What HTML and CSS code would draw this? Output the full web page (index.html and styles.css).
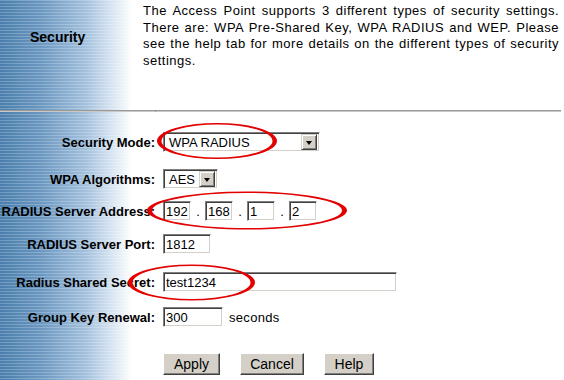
FILE: index.html
```html
<!DOCTYPE html>
<html lang="en">
  <head>
    <meta charset="UTF-8" />
    <title>Security</title>
    <link rel="stylesheet" href="styles.css">
  </head>
  <body>
    <div class="page">
      <div class="intro">
        <div class="side">
          <h2 class="title">Security</h2>
        </div>
        <p class="desc">
          The Access Point supports 3 different types of security settings.
          There are: WPA Pre-Shared Key, WPA RADIUS and WEP. Please see the
          help tab for more details on the different types of security
          settings.
        </p>
      </div>

      <div class="rule">
        <span class="rule-left"></span>
        <span class="rule-right"></span>
      </div>

      <form class="form">
        <div class="row gap-1">
          <div class="label"><span>Security Mode:</span></div>
          <div class="select mode">
            <span class="select-value">WPA RADIUS</span>
            <span class="select-btn"><i class="caret"></i></span>
          </div>
        </div>

        <div class="row gap-2">
          <div class="label"><span>WPA Algorithms:</span></div>
          <div class="select algo">
            <span class="select-value">AES</span>
            <span class="select-btn"><i class="caret"></i></span>
          </div>
        </div>

        <div class="row gap-3">
          <div class="label"><span>RADIUS Server Address:</span></div>
          <div class="ip">
            <input class="field octet" type="text" value="192">
            <span class="dot">.</span>
            <input class="field octet" type="text" value="168">
            <span class="dot">.</span>
            <input class="field octet" type="text" value="1">
            <span class="dot">.</span>
            <input class="field octet" type="text" value="2">
          </div>
        </div>

        <div class="row gap-4">
          <div class="label"><span>RADIUS Server Port:</span></div>
          <input class="field port" type="text" value="1812">
        </div>

        <div class="row gap-5">
          <div class="label"><span>Radius Shared Secret:</span></div>
          <input class="field secret" type="text" value="test1234">
        </div>

        <div class="row gap-6">
          <div class="label"><span>Group Key Renewal:</span></div>
          <input class="field renewal" type="text" value="300">
          <span class="unit">seconds</span>
        </div>

        <div class="row buttons">
          <div class="label"></div>
          <button class="btn apply" type="button">Apply</button>
          <button class="btn cancel" type="button">Cancel</button>
          <button class="btn help" type="button">Help</button>
        </div>
      </form>

      <!-- red marker circles drawn on top of the screenshot -->
      <svg class="marks" width="564" height="380" viewBox="0 0 564 380">
        <path fill-rule="evenodd" d="M157 141 a60 18 0 1 0 120 0 a60 18 0 1 0 -120 0 Z M161.5 141 a55.5 16.5 0 1 0 111 0 a55.5 16.5 0 1 0 -111 0 Z" />
        <path fill-rule="evenodd" d="M147 210.5 a100 19 0 1 0 200 0 a100 19 0 1 0 -200 0 Z M152 210.5 a95 17.5 0 1 0 190 0 a95 17.5 0 1 0 -190 0 Z" />
        <path fill-rule="evenodd" d="M128 282.5 a63.5 18 0 1 0 127 0 a63.5 18 0 1 0 -127 0 Z M132.5 282.5 a59 16.5 0 1 0 118 0 a59 16.5 0 1 0 -118 0 Z" />
      </svg>
    </div>
  </body>
</html>
```

FILE: styles.css
```css
html,
body {
  margin: 0;
  padding: 0;
  background: #fff;
  font-family: "Liberation Sans", Arial, Helvetica, sans-serif;
  color: #000;
}
* {
  box-sizing: border-box;
}
.page {
  position: relative;
  width: 564px;
  height: 380px;
  overflow: hidden;
  background-color: #fff;
  background-image:
    repeating-linear-gradient(to bottom, rgba(255, 255, 255, 0.22) 0 1px, transparent 1px 3px),
    linear-gradient(to right, #4a7eac 0, #6b97c0 40px, #a2c0dc 85px, #dde8f3 115px, #fff 132px);
  background-size: 132px 100%, 132px 100%;
  background-repeat: no-repeat;
}
/* header block */
.intro {
  display: flex;
  height: 110px;
}
.side {
  width: 143px;
  flex-shrink: 0;
}
.title {
  margin: 29px 0 0 30px;
  font-size: 14px;
  line-height: 17px;
  font-weight: bold;
}
.desc {
  width: 416px;
  margin: 3px 0 0;
  font-size: 13px;
  line-height: 16.5px;
  letter-spacing: 0.5px;
  text-align: justify;
}
.rule {
  display: flex;
  width: 561px;
  height: 2px;
}
.rule-left,
.rule-right {
  display: block;
  height: 2px;
  border-top: 1px solid #9a9a9a;
  border-bottom: 1px solid #c8c8c8;
}
.rule-left {
  width: 155px;
}
.rule-right {
  flex: 1;
  border-left: 1px solid #7a7a7a;
}
/* form rows */
.form {
  margin: 0;
}
.row {
  display: flex;
  align-items: center;
  height: 20px;
}
.gap-1 { margin-top: 20px; }
.gap-2 { margin-top: 17px; }
.gap-3 { margin-top: 12px; }
.gap-4 { margin-top: 13px; }
.gap-5 { margin-top: 18px; }
.gap-6 { margin-top: 15px; }
.buttons {
  margin-top: 26px;
  height: 22px;
  gap: 20px;
}
.buttons .label {
  margin-right: -12px;
}
.label {
  display: flex;
  justify-content: flex-end;
  width: 155px;
  flex-shrink: 0;
  margin-right: 8px;
  font-size: 13px;
  font-weight: bold;
  white-space: nowrap;
}
/* sunken controls */
.field,
.select {
  height: 20px;
  border-top: 1px solid #808080;
  border-left: 1px solid #808080;
  border-right: 1px solid #fff;
  border-bottom: 1px solid #fff;
  box-shadow: inset 1px 1px 0 #404040, inset -1px -1px 0 #d4d0c8;
  background: #fff;
}
.field {
  margin: 0;
  padding: 0 0 0 2px;
  font-family: "Liberation Sans", Arial, Helvetica, sans-serif;
  font-size: 13px;
  color: #000;
  outline: none;
}
.select {
  display: flex;
  align-items: center;
  justify-content: space-between;
  padding: 2px;
  font-size: 13px;
}
.select-value {
  padding-left: 3px;
}
.select-btn {
  display: flex;
  align-items: center;
  justify-content: center;
  width: 16px;
  height: 16px;
  background: #d4d0c8;
  border-top: 1px solid #d4d0c8;
  border-left: 1px solid #d4d0c8;
  border-right: 1px solid #404040;
  border-bottom: 1px solid #404040;
  box-shadow: inset 1px 1px 0 #fff, inset -1px -1px 0 #808080;
}
.caret {
  display: block;
  width: 0;
  height: 0;
  border-left: 3.5px solid transparent;
  border-right: 3.5px solid transparent;
  border-top: 4px solid #000;
  margin-top: 1px;
}
.mode {
  width: 157px;
}
.algo {
  width: 55px;
}
.ip {
  display: flex;
  align-items: center;
}
.octet {
  width: 28px;
}
.dot {
  width: 14px;
  text-align: center;
  font-size: 13px;
}
.port {
  width: 48px;
}
.secret {
  width: 234px;
}
.renewal {
  width: 60px;
}
.unit {
  margin-left: 6px;
  font-size: 13px;
  letter-spacing: 0.3px;
}
/* raised buttons */
.btn {
  height: 22px;
  margin: 0;
  padding: 0;
  font-family: "Liberation Sans", Arial, Helvetica, sans-serif;
  font-size: 14px;
  color: #000;
  background: #d4d0c8;
  border-top: 1px solid #fff;
  border-left: 1px solid #fff;
  border-right: 1px solid #404040;
  border-bottom: 1px solid #404040;
  box-shadow: inset -1px -1px 0 #808080;
}
.apply {
  width: 57px;
}
.cancel {
  width: 64px;
}
.help {
  width: 50px;
}
/* annotation overlay */
.marks {
  position: absolute;
  top: 0;
  left: 0;
  pointer-events: none;
  fill: #e20000;
}
```
